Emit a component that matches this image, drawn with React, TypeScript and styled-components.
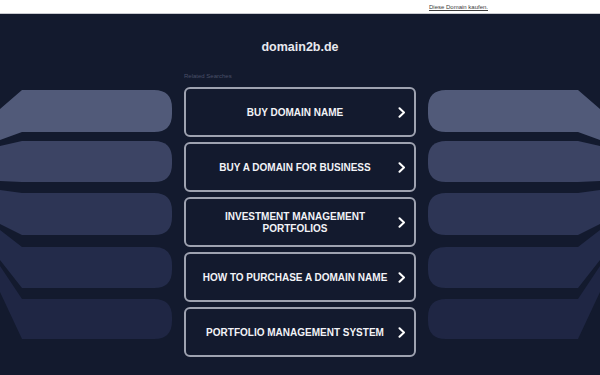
import React from "react";
import styled, { createGlobalStyle } from "styled-components";

const GlobalStyle = createGlobalStyle`
  html, body { margin: 0; padding: 0; }
  body {
    width: 600px;
    height: 375px;
    overflow: hidden;
    background: #131a2e;
    font-family: "Liberation Sans", Arial, sans-serif;
  }
`;

const Page = styled.div`
  width: 600px;
  height: 375px;
  display: flex;
  flex-direction: column;
  background: #131a2e;
`;

const TopBar = styled.div`
  height: 13px;
  background: #ffffff;
  border-bottom: 1px solid #c9cad0;
  display: flex;
  align-items: center;
  justify-content: flex-end;
  padding-right: 112px;
`;

const BuyLink = styled.a`
  font-size: 6px;
  line-height: 8px;
  color: #3a3a3a;
  text-decoration: underline;
  margin-top: 1px;
`;

const Main = styled.div`
  flex: 1;
  display: flex;
  flex-direction: row;
`;

const Deco = styled.svg<{ $mirrored?: boolean }>`
  width: 184px;
  height: 361px;
  flex: none;
  display: block;
  transform: ${(p) => (p.$mirrored ? "scaleX(-1)" : "none")};
`;

const Center = styled.div`
  width: 232px;
  flex: none;
  display: flex;
  flex-direction: column;
  padding-top: 25px;
`;

const Title = styled.h1`
  margin: 0;
  font-size: 12.5px;
  line-height: 16px;
  font-weight: 700;
  color: #e8e9ef;
  text-align: center;
`;

const Label = styled.div`
  margin-top: 17px;
  font-size: 6px;
  line-height: 8px;
  color: #4a5068;
`;

const List = styled.div`
  margin-top: 7px;
  display: flex;
  flex-direction: column;
  gap: 5px;
`;

const Item = styled.a`
  box-sizing: border-box;
  height: 50px;
  border: 2px solid #9ea2b0;
  border-radius: 6px;
  display: flex;
  align-items: center;
  padding: 1px 8px 0 9px;
  gap: 3px;
  color: #f2f3f7;
  text-decoration: none;
`;

const ItemText = styled.span`
  flex: 1;
  text-align: center;
  font-size: 10px;
  line-height: 12px;
  font-weight: 700;
  text-transform: uppercase;
`;

const Chevron = styled.svg`
  width: 8px;
  height: 11px;
  flex: none;
  display: block;
`;

type Bar = {
  top: number;
  bottom: number;
  lTop: number;
  lBottom: number;
  fill: string;
};

const bars: Bar[] = [
  { top: 90, bottom: 132, lTop: 109, lBottom: 140, fill: "#515a79" },
  { top: 141, bottom: 182, lTop: 146, lBottom: 181, fill: "#3c4464" },
  { top: 193, bottom: 235, lTop: 190, lBottom: 224, fill: "#2d3555" },
  { top: 247, bottom: 288, lTop: 230, lBottom: 260, fill: "#232b4a" },
  { top: 299, bottom: 339, lTop: 266, lBottom: 292, fill: "#1f2644" },
];

const barPath = (b: Bar) => {
  const r = 18;
  const right = 172;
  const stub = 22;
  return [
    `M0 ${b.lTop}`,
    `L${stub} ${b.top}`,
    `L${right - r} ${b.top}`,
    `Q${right} ${b.top} ${right} ${b.top + r}`,
    `L${right} ${b.bottom - r}`,
    `Q${right} ${b.bottom} ${right - r} ${b.bottom}`,
    `L${stub} ${b.bottom}`,
    `L0 ${b.lBottom}`,
    "Z",
  ].join(" ");
};

const SideDeco: React.FC<{ mirrored?: boolean }> = ({ mirrored }) => (
  <Deco $mirrored={mirrored} viewBox="0 14 184 361" preserveAspectRatio="none">
    {bars.map((b, i) => (
      <path key={i} d={barPath(b)} fill={b.fill} />
    ))}
  </Deco>
);

const items = [
  "Buy Domain Name",
  "Buy a Domain for Business",
  "Investment Management Portfolios",
  "How to Purchase a Domain Name",
  "Portfolio Management System",
];

export default function App() {
  return (
    <>
      <GlobalStyle />
      <Page>
        <TopBar>
          <BuyLink href="#">Diese Domain kaufen.</BuyLink>
        </TopBar>
        <Main>
          <SideDeco />
          <Center>
            <Title>domain2b.de</Title>
            <Label>Related Searches</Label>
            <List>
              {items.map((t) => (
                <Item href="#" key={t}>
                  <ItemText>{t}</ItemText>
                  <Chevron viewBox="0 0 8 11">
                    <path
                      d="M1.5 1.2 L6 5.5 L1.5 9.8"
                      fill="none"
                      stroke="#ffffff"
                      strokeWidth="2"
                      strokeLinecap="round"
                      strokeLinejoin="round"
                    />
                  </Chevron>
                </Item>
              ))}
            </List>
          </Center>
          <SideDeco mirrored />
        </Main>
      </Page>
    </>
  );
}
